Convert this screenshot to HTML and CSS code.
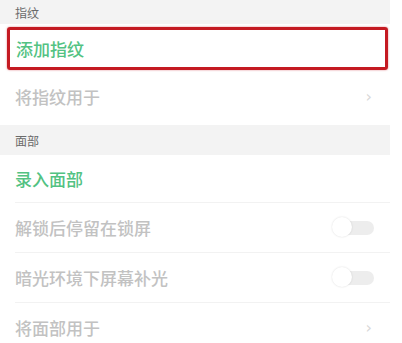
FILE: index.html
```html
<!DOCTYPE html>
<html lang="zh">
<head>
<meta charset="utf-8">
<link rel="stylesheet" href="styles.css">
</head>
<body>
<div class="page">
  <div class="section-head first">指纹</div>
  <div class="row highlight"><span class="green">添加指纹</span></div>
  <div class="row"><span class="muted">将指纹用于</span><span class="chev">›</span></div>
  <div class="section-head second">面部</div>
  <div class="row line"><span class="green">录入面部</span></div>
  <div class="row line tall"><span class="muted">解锁后停留在锁屏</span><span class="toggle"><span class="knob"></span></span></div>
  <div class="row line tall"><span class="muted">暗光环境下屏幕补光</span><span class="toggle"><span class="knob"></span></span></div>
  <div class="row"><span class="muted">将面部用于</span><span class="chev">›</span></div>
</div>
</body>
</html>
```
FILE: styles.css
```css
html, body {
  margin: 0;
  padding: 0;
  background: #ffffff;
}
body {
  font-family: "Noto Sans CJK SC", "Noto Sans", sans-serif;
}
.page {
  width: 390px;
  display: flex;
  flex-direction: column;
}
.section-head {
  background: #f3f3f3;
  color: #6a6a6a;
  font-size: 12px;
  padding-left: 15px;
  display: flex;
  align-items: center;
}
.section-head.first {
  height: 24px;
}
.section-head.second {
  height: 30px;
  margin-top: 5px;
}
.row {
  display: flex;
  align-items: center;
  justify-content: space-between;
  height: 48px;
  padding: 0 18px 0 15px;
  font-size: 17px;
  font-weight: 500;
  box-sizing: border-box;
}
.row.line {
  border-bottom: 1px solid #f2f2f2;
  margin-left: 15px;
  padding-left: 0;
}
.row.tall {
  height: 50px;
}
.row.highlight {
  height: 43px;
  margin: 3px 2px 2px 7px;
  padding-left: 6px;
  border: 3px solid #c41a22;
  border-radius: 3px;
  box-shadow: 0 0 2px rgba(200, 30, 40, 0.6);
}
.green {
  color: #52c282;
}
.muted {
  color: #c2c2c2;
}
.chev {
  color: #d8d8d8;
  font-size: 16px;
  font-weight: 400;
  font-family: "DejaVu Sans", sans-serif;
}
.toggle {
  position: relative;
  width: 38px;
  height: 14px;
  border-radius: 7px;
  background: #ededed;
  margin-right: -2px;
}
.knob {
  position: absolute;
  left: -4px;
  top: -4px;
  width: 20px;
  height: 20px;
  border-radius: 50%;
  background: #ffffff;
  box-shadow: 0 0 2px rgba(0, 0, 0, 0.15);
}
```
